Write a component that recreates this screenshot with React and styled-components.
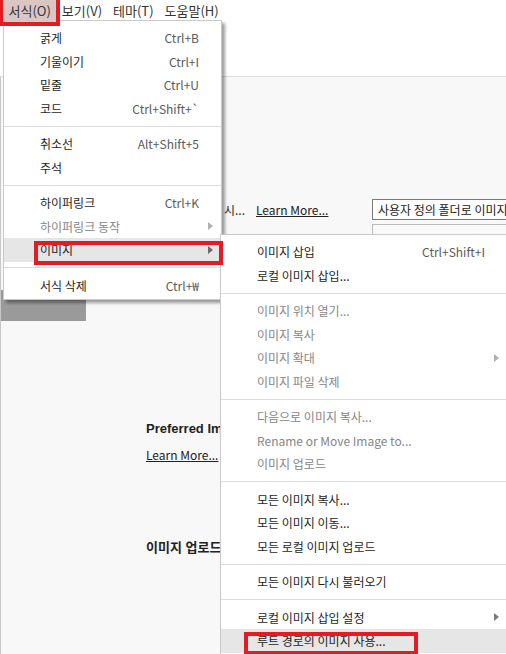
import React from 'react';
import styled, { createGlobalStyle } from 'styled-components';

const GlobalStyle = createGlobalStyle`
  html, body {
    margin: 0;
    padding: 0;
  }
  body {
    background: #f8f8f8;
    font-family: "Noto Sans CJK KR", "Noto Sans", sans-serif;
  }
`;

const Page = styled.div`
  position: relative;
  width: 506px;
  height: 654px;
  overflow: hidden;
  display: flex;
  flex-direction: column;
  background: #f8f8f8;
`;

const Header = styled.div`
  height: 77px;
  box-sizing: border-box;
  background: #fff;
  border-bottom: 1px solid #dcdcdc;
`;

const MenuBar = styled.div`
  display: flex;
  height: 22px;
  padding-left: 3px;
`;

const MenuTitle = styled.div`
  padding: 0 5.5px;
  line-height: 22px;
  font-size: 13px;
  color: #333;
  background: ${props => (props.$open ? '#dac7c4' : 'transparent')};
  outline: ${props => (props.$marked ? '4px solid #e31b23' : 'none')};
  position: relative;
  z-index: ${props => (props.$marked ? 10 : 'auto')};
`;

const Content = styled.div`
  flex: 1;
  display: flex;
  border-left: 1px solid #c8c8c8;
`;

const Sidebar = styled.div`
  width: 85px;
  flex-shrink: 0;
`;

const SideItem = styled.div`
  margin-top: 213px;
  height: 31px;
  background: ${props => (props.$active ? '#9a9a9a' : 'transparent')};
`;

const Main = styled.div`
  flex: 1;
  padding: 122px 0 0 60px;
  color: #222;
  font-size: 12px;
`;

const SettingRow = styled.div`
  display: flex;
  align-items: center;
  height: 21px;
`;

const Label = styled.div`
  width: 99px;
  text-align: right;
  white-space: nowrap;
`;

const LinkText = styled.div`
  width: ${props => props.$width || 'auto'};
  margin-left: ${props => props.$indent || '0'};
  margin-top: ${props => props.$top || '0'};
  line-height: 18px;
  text-decoration: underline;
  white-space: nowrap;
`;

const TextInput = styled.div`
  width: 220px;
  height: 21px;
  box-sizing: border-box;
  border: 1px solid #7a7a7a;
  background: #fff;
  padding: 0 5px;
  line-height: 19px;
  font-size: 12px;
  white-space: nowrap;
`;

const SelectBox = styled.div`
  margin: 4px 0 0 226px;
  width: 220px;
  height: 24px;
  box-sizing: border-box;
  border: 1px solid #bbb;
  background: #fafafa;
`;

const Heading = styled.div`
  margin-top: ${props => props.$top};
  line-height: 18px;
  font-family: "Liberation Sans", "Noto Sans CJK KR", sans-serif;
  font-size: 13px;
  font-weight: bold;
  white-space: nowrap;
`;

const Menu = styled.div`
  position: absolute;
  top: ${props => props.$top}px;
  left: ${props => props.$left}px;
  width: ${props => props.$width}px;
  box-sizing: border-box;
  padding: 5px 0 2px;
  background: #fff;
  border: 1px solid #c9c9c9;
  box-shadow: 3px 3px 3px rgba(0, 0, 0, 0.38);
  font-size: 12px;
`;

const Item = styled.div`
  position: relative;
  display: flex;
  align-items: center;
  height: 23.5px;
  padding-left: 36px;
  background: ${props => (props.$hover ? '#e6e6e6' : 'transparent')};
  color: ${props => (props.$disabled ? '#868686' : '#1e1e1e')};
  white-space: nowrap;
`;

const ItemLabel = styled.span`
  flex: 1;
`;

const Shortcut = styled.span`
  color: ${props => (props.$disabled ? '#9a9a9a' : '#5a5a5a')};
`;

const ArrowCell = styled.span`
  width: 22px;
  display: flex;
  justify-content: center;
`;

const Arrow = styled.span`
  width: 0;
  height: 0;
  border-left: 5px solid ${props => props.$color || '#aaa'};
  border-top: 4px solid transparent;
  border-bottom: 4px solid transparent;
`;

const Separator = styled.div`
  height: 1px;
  margin: 5.5px 0;
  background: #dcdcdc;
`;

const Frame = styled.div`
  position: absolute;
  z-index: 10;
  left: ${props => props.$left}px;
  top: ${props => props.$top}px;
  width: ${props => props.$width}px;
  height: ${props => props.$height}px;
  box-sizing: border-box;
  border: 4px solid #e31b23;
  pointer-events: none;
`;

const formatItems = [
  { label: '굵게', key: 'Ctrl+B' },
  { label: '기울이기', key: 'Ctrl+I' },
  { label: '밑줄', key: 'Ctrl+U' },
  { label: '코드', key: 'Ctrl+Shift+`' },
  'sep',
  { label: '취소선', key: 'Alt+Shift+5' },
  { label: '주석' },
  'sep',
  { label: '하이퍼링크', key: 'Ctrl+K' },
  { label: '하이퍼링크 동작', disabled: true, arrow: '#b0b0b0' },
  { label: '이미지', hover: true, arrow: '#6a6a6a', frame: { left: 30, top: 2.5, width: 189, height: 24 } },
  'sep',
  { label: '서식 삭제', key: 'Ctrl+₩' },
];

const imageItems = [
  { label: '이미지 삽입', key: 'Ctrl+Shift+I' },
  { label: '로컬 이미지 삽입...' },
  'sep',
  { label: '이미지 위치 열기...', disabled: true },
  { label: '이미지 복사', disabled: true },
  { label: '이미지 확대', disabled: true, arrow: '#b0b0b0' },
  { label: '이미지 파일 삭제', disabled: true },
  'sep',
  { label: '다음으로 이미지 복사...', disabled: true },
  { label: 'Rename or Move Image to...', disabled: true },
  { label: '이미지 업로드', disabled: true },
  'sep',
  { label: '모든 이미지 복사...' },
  { label: '모든 이미지 이동...' },
  { label: '모든 로컬 이미지 업로드' },
  'sep',
  { label: '모든 이미지 다시 불러오기' },
  'sep',
  { label: '로컬 이미지 삽입 설정', arrow: '#7a7a7a' },
  { label: '루트 경로의 이미지 사용...', hover: true, frame: { left: 23, top: 3, width: 174, height: 23 } },
];

function MenuList({ items }) {
  return items.map((item, i) =>
    item === 'sep' ? (
      <Separator key={i} />
    ) : (
      <Item key={i} $hover={item.hover} $disabled={item.disabled}>
        <ItemLabel>{item.label}</ItemLabel>
        {item.key && <Shortcut $disabled={item.disabled}>{item.key}</Shortcut>}
        <ArrowCell>{item.arrow && <Arrow $color={item.arrow} />}</ArrowCell>
        {item.frame && (
          <Frame
            $left={item.frame.left}
            $top={item.frame.top}
            $width={item.frame.width}
            $height={item.frame.height}
          />
        )}
      </Item>
    )
  );
}

export default function App() {
  return (
    <Page>
      <GlobalStyle />
      <Header>
        <MenuBar>
          <MenuTitle $open $marked>서식(O)</MenuTitle>
          <MenuTitle>보기(V)</MenuTitle>
          <MenuTitle>테마(T)</MenuTitle>
          <MenuTitle>도움말(H)</MenuTitle>
        </MenuBar>
      </Header>
      <Content>
        <Sidebar>
          <SideItem $active />
        </Sidebar>
        <Main>
          <SettingRow>
            <Label>이미지 삽입 시...</Label>
            <LinkText $indent="11px" $width="116px">Learn More...</LinkText>
            <TextInput>사용자 정의 폴더로 이미지 복사</TextInput>
          </SettingRow>
          <SelectBox />
          <Heading $top="172px">Preferred Image Syntax</Heading>
          <LinkText $top="8px">Learn More...</LinkText>
          <Heading $top="75px">이미지 업로드 서비스</Heading>
        </Main>
      </Content>

      <Menu $top={20} $left={3} $width={219}>
        <MenuList items={formatItems} />
      </Menu>
      <Menu $top={234} $left={220} $width={288}>
        <MenuList items={imageItems} />
      </Menu>
    </Page>
  );
}
